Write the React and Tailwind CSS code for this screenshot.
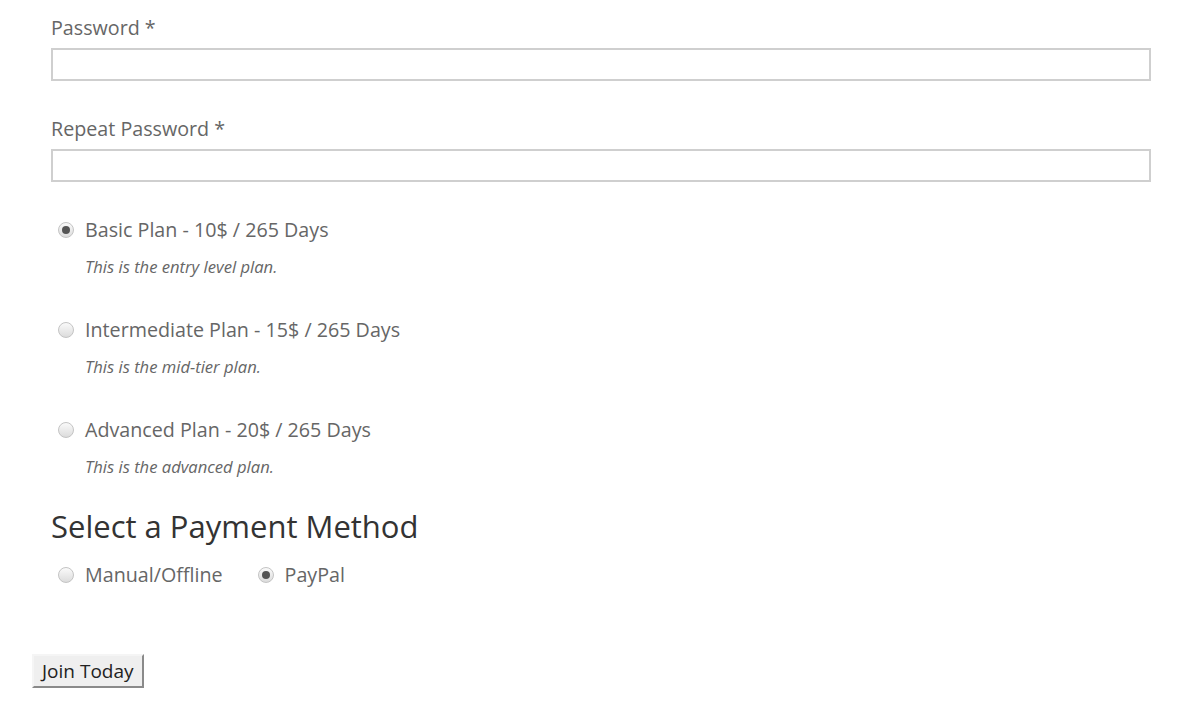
import React from "react";

const font = { fontFamily: '"Open Sans", "Noto Sans", sans-serif' };

function Radio({ checked }) {
  return (
    <span className="inline-flex w-[16px] h-[16px] shrink-0 items-center justify-center rounded-full border border-[#c4c4c4] bg-gradient-to-b from-[#fafafa] to-[#dcdcdc]">
      {checked && <span className="w-[8px] h-[8px] rounded-full bg-[#555]" />}
    </span>
  );
}

const plans = [
  { name: "Basic Plan - 10$ / 265 Days", desc: "This is the entry level plan.", checked: true },
  { name: "Intermediate Plan - 15$ / 265 Days", desc: "This is the mid-tier plan.", checked: false },
  { name: "Advanced Plan - 20$ / 265 Days", desc: "This is the advanced plan.", checked: false },
];

export default function App() {
  return (
    <div className="min-h-screen bg-white pt-[15px] pb-[32px] text-[#666]" style={font}>
      <div className="pl-[51px] pr-[49px]">
        {/* Passwords */}
        <label className="block text-[19.7px] leading-[25px] mb-[8px]">Password *</label>
        <div className="h-[33px] border-2 border-[#cfcfcf] bg-white" />

        <label className="block text-[19.7px] leading-[25px] mt-[35px] mb-[8px]">Repeat Password *</label>
        <div className="h-[33px] border-2 border-[#cfcfcf] bg-white" />

        {/* Plans */}
        <div className="mt-[35px] pl-[7px] flex flex-col gap-[39px]">
          {plans.map((p) => (
            <div key={p.name}>
              <div className="flex items-center gap-[11px] h-[26px]">
                <Radio checked={p.checked} />
                <span className="text-[19.7px] leading-[26px]">{p.name}</span>
              </div>
              <p className="mt-[13px] pl-[27px] italic text-[16.6px] leading-[22px] text-[#666]">{p.desc}</p>
            </div>
          ))}
        </div>

        {/* Payment */}
        <h2 className="mt-[28px] text-[31px] leading-[40px] text-[#333]">Select a Payment Method</h2>
        <div className="mt-[16px] pl-[7px] flex items-center h-[26px] text-[19.7px]">
          <div className="flex items-center gap-[11px]">
            <Radio checked={false} />
            <span>Manual/Offline</span>
          </div>
          <div className="flex items-center gap-[11px] ml-[35px]">
            <Radio checked={true} />
            <span>PayPal</span>
          </div>
        </div>
      </div>

      <div className="pl-[32px] mt-[66px]">
        <button className="h-[34px] px-[8px] text-[19px] leading-[24px] text-[#222] bg-[#efefef] border-2 border-t-[#f5f5f5] border-l-[#f5f5f5] border-r-[#8a8a8a] border-b-[#8a8a8a]">
          Join Today
        </button>
      </div>
    </div>
  );
}
